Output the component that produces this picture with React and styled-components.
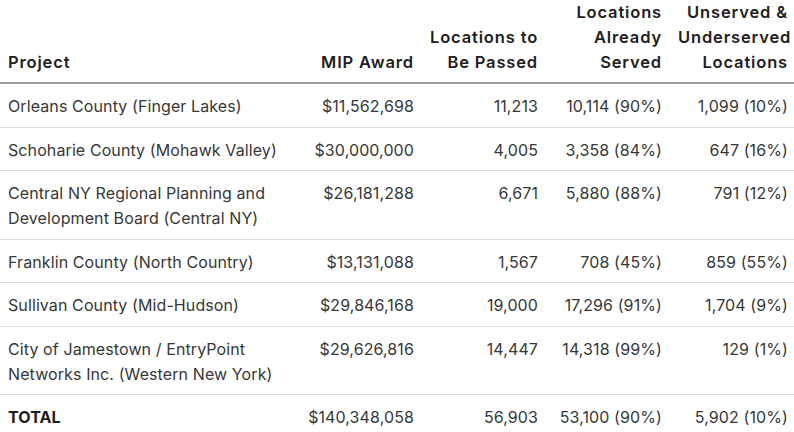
import React from 'react'
import styled, { createGlobalStyle } from 'styled-components'

const GlobalStyle = createGlobalStyle`
  html, body {
    margin: 0;
    padding: 0;
    background: #ffffff;
  }
  body {
    font-family: Inter, "Noto Sans", sans-serif;
    color: #363737;
  }
`

const Table = styled.table`
  width: 794px;
  border-collapse: collapse;
  table-layout: fixed;
  font-size: 16px;
  line-height: 25px;
  letter-spacing: 0.1px;
`

const HeadCell = styled.th`
  text-align: ${p => (p.left ? 'left' : 'right')};
  vertical-align: bottom;
  white-space: nowrap;
  font-weight: 600;
  font-size: 16.5px;
  letter-spacing: 0.85px;
  color: #1f2020;
  padding: 0 ${p => (p.last ? '6px' : '8px')} 7px 8px;
  border-bottom: 2px solid #9a9a9a;
`

const Row = styled.tr`
  border-bottom: ${p => (p.final ? 'none' : '1px solid #dcdcdc')};
`

const Cell = styled.td`
  text-align: ${p => (p.left ? 'left' : 'right')};
  vertical-align: top;
  font-weight: ${p => (p.bold ? 700 : 400)};
  color: ${p => (p.bold ? '#1f2020' : '#363737')};
  padding: 10px ${p => (p.last ? '6px' : '8px')} 7.5px 8px;
`

const rows = [
  ['Orleans County (Finger Lakes)', '$11,562,698', '11,213', '10,114 (90%)', '1,099 (10%)'],
  ['Schoharie County (Mohawk Valley)', '$30,000,000', '4,005', '3,358 (84%)', '647 (16%)'],
  ['Central NY Regional Planning and Development Board (Central NY)', '$26,181,288', '6,671', '5,880 (88%)', '791 (12%)'],
  ['Franklin County (North Country)', '$13,131,088', '1,567', '708 (45%)', '859 (55%)'],
  ['Sullivan County (Mid-Hudson)', '$29,846,168', '19,000', '17,296 (91%)', '1,704 (9%)'],
  ['City of Jamestown / EntryPoint Networks Inc. (Western New York)', '$29,626,816', '14,447', '14,318 (99%)', '129 (1%)'],
]

const total = ['TOTAL', '$140,348,058', '56,903', '53,100 (90%)', '5,902 (10%)']

export default function App() {
  return (
    <>
      <GlobalStyle />
      <Table>
        <colgroup>
          <col style={{ width: 300 }} />
          <col style={{ width: 122 }} />
          <col style={{ width: 124 }} />
          <col style={{ width: 124 }} />
          <col style={{ width: 124 }} />
        </colgroup>
        <thead>
          <tr>
            <HeadCell left>Project</HeadCell>
            <HeadCell>MIP Award</HeadCell>
            <HeadCell>Locations to<br />Be Passed</HeadCell>
            <HeadCell>Locations<br />Already<br />Served</HeadCell>
            <HeadCell last>Unserved &amp;<br />Underserved<br />Locations</HeadCell>
          </tr>
        </thead>
        <tbody>
          {rows.map(r => (
            <Row key={r[0]}>
              {r.map((v, i) => (
                <Cell key={i} left={i === 0} last={i === 4}>{v}</Cell>
              ))}
            </Row>
          ))}
          <Row final>
            {total.map((v, i) => (
              <Cell key={i} left={i === 0} last={i === 4} bold={i === 0}>{v}</Cell>
            ))}
          </Row>
        </tbody>
      </Table>
    </>
  )
}
